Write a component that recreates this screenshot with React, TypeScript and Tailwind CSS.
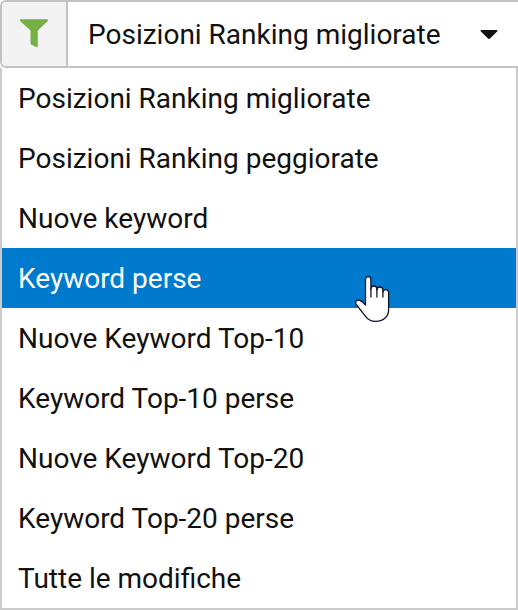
import { useState } from 'react';

const FILTERS = [
  'Posizioni Ranking migliorate',
  'Posizioni Ranking peggiorate',
  'Nuove keyword',
  'Keyword perse',
  'Nuove Keyword Top-10',
  'Keyword Top-10 perse',
  'Nuove Keyword Top-20',
  'Keyword Top-20 perse',
  'Tutte le modifiche',
];

function FunnelIcon() {
  return (
    <svg width="28" height="30" viewBox="0 0 28 30" fill="#76b043" aria-hidden="true">
      <path d="M1 .3h26c1 0 1.300 1.200.6 1.900L17.800 11.500v15.500c0 1-.8 1.500-1.700 1.100l-4.500-2.300c-.7-.4-1.100-1-1.100-1.800V11.500L.4 2.200C-.3 1.500 0 .3 1 .3z" />
    </svg>
  );
}

function HandPointer() {
  return (
    <svg
      className="pointer-events-none absolute top-7 left-88 z-10"
      width="36"
      height="48"
      viewBox="0 0 36 48"
      fill="none"
      aria-hidden="true"
    >
      <path
        d="M11.500 29V3.300a2.700 2.700 0 0 1 5.400 0V13a3 3 0 0 1 6 0v1a3 3 0 0 1 6 0v2a2.900 2.900 0 0 1 5.700 0V34c0 7-5.700 11.300-13 11.300-4.600 0-8-2-10.500-5.500L2.300 28.500c-1.300-2-.3-4.300 1.800-4.500 3-.2 5 2.500 7.400 5z"
        fill="white"
        stroke="#14142b"
        strokeWidth="1.300"
        strokeLinejoin="round"
      />
      <path d="M16.900 12v9.500M22.900 13v8.500M28.900 15v6.500" stroke="#14142b" strokeWidth="1.300" />
    </svg>
  );
}

export default function App() {
  const [selected, setSelected] = useState(FILTERS[0]);
  const [active, setActive] = useState('Keyword perse');
  const [open, setOpen] = useState(true);

  return (
    <main className="w-full bg-white font-['Roboto',sans-serif] text-[28px] leading-8 text-[#111111]">
      <div className="flex h-17 rounded-l-md border-2 border-r-0 border-[#c3c3c3]">
        <label
          htmlFor="filter"
          aria-label="Filtro"
          className="flex w-16 shrink-0 items-center justify-center rounded-l bg-[#f3f3f3]"
        >
          <FunnelIcon />
        </label>
        <div className="relative flex-1 border-l-2 border-[#c3c3c3]">
          <select
            id="filter"
            value={selected}
            onChange={(e) => setSelected(e.target.value)}
            onMouseDown={(e) => {
              e.preventDefault();
              setOpen(!open);
            }}
            className="h-full w-full appearance-none bg-transparent pt-0.5 pr-14 pl-5 outline-none"
          >
            {FILTERS.map((filter) => (
              <option key={filter}>{filter}</option>
            ))}
          </select>
          <svg
            className="pointer-events-none absolute top-7 right-5"
            width="18"
            height="10"
            viewBox="0 0 18 10"
            fill="#111111"
            aria-hidden="true"
          >
            <path d="M1.500 0h15c.9 0 1.200.8.6 1.400L10 8.500c-.6.600-1.400.6-2 0L.9 1.400C.3.800.6 0 1.500 0z" />
          </svg>
        </div>
      </div>

      {open && (
        <ul className="border-2 border-t-0 border-[#cbcbcb]">
          {FILTERS.map((filter) => (
            <li key={filter} className="relative">
              <button
                type="button"
                onMouseEnter={() => setActive(filter)}
                onClick={() => {
                  setSelected(filter);
                  setOpen(false);
                }}
                className={`block h-15 w-full px-4 pt-0.5 text-left ${
                  filter === active ? 'bg-[#007acc] text-white' : ''
                }`}
              >
                {filter}
              </button>
              {filter === active && <HandPointer />}
            </li>
          ))}
        </ul>
      )}
    </main>
  );
}
